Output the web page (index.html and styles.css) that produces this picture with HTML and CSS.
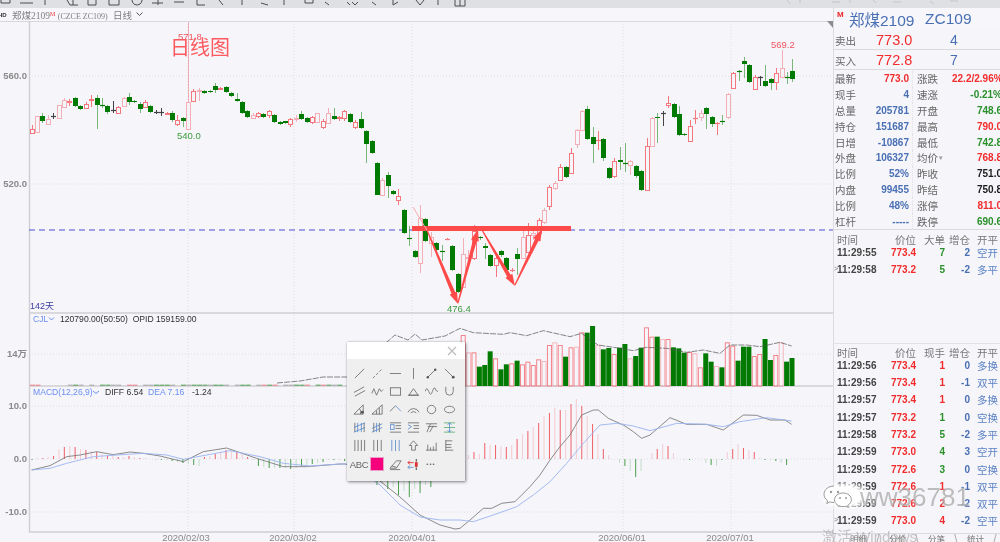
FILE: index.html
```html
<!DOCTYPE html>
<html lang="zh">
<head>
<meta charset="utf-8">
<title>郑煤2109 日线图</title>
<link rel="stylesheet" href="styles.css">
</head>
<body>
<div class="app">
  <svg class="toolbar" viewBox="0 0 1000 8" width="1000" height="8" aria-hidden="true">
    <path class="tb" d="M1 0v3h9V0M20 3h13M45 0v5M67 0l3 5h8M73 0v5M88 0v5h8V0M109 0v5h10V0M132 0a5 5 0 0 0 8 4 5 5 0 0 0 2-4M152 3h11M158 0v5M174 2h10M197 0v5h8M219 0l4 5M242 0v5M261 3l7 2M284 0v5M305 0v3h8V0M325 2l4 3M347 2l3 3M352 2l3 3 3-3M372 2l4 3M393 0v5l5-3M416 0l4 5 4-5M438 0v5"/>
    <path class="tb" d="M455 0v6h10V0M460 6V0"/>
    <path class="tb faint" d="M787 0l3 4M800 0v3M832 2h8M850 0v3M873 0l3 3M893 2h8M930 1l4 3M950 1h8"/>
  </svg>
  <div class="main">
    <div class="chart-col">
      <div class="tabbar">
        <span class="tab-hd">HD</span>
        <span class="tab-name">郑煤2109<sup class="tab-m">M</sup> <span class="tab-code">(CZCE ZC109)</span></span>
        <span class="tab-period">日线</span>
        <svg class="tab-chev" viewBox="0 0 7 5" width="7" height="5" aria-hidden="true"><path d="M.5 .5l3 3 3-3"/></svg>
      </div>
      <svg id="chart" class="chart" viewBox="0 21 833 521" width="833" height="521">
        <g class="grid">
          <path d="M29 76H833M29 184H833M29 354H833M29 406H833M29 459H833M29 512H833"/>
          <path d="M188 21V532M294 21V532M412 21V532M623 21V532M731 21V532"/>
        </g>
        <path class="basis" d="M29.5 21V532M29 313H833M29 386H833M29 532H833"/>
        <path class="midline" d="M29 230H833"/>
        <path class="corner" d="M827 21h6v7z"/>
        <g id="candles"></g>
        <g id="volumes"></g>
        <path id="volline" class="line-v"/>
        <g id="histo"></g>
        <path id="diff" class="line-k"/>
        <path id="dea" class="line-b"/>
        <g class="ax">
          <text x="27" y="79">560.0</text>
          <text x="27" y="187">520.0</text>
          <text x="27" y="357">14万</text>
          <text x="27" y="409">10.0</text>
          <text x="27" y="462">0.0</text>
          <text x="27" y="515">-10.0</text>
        </g>
        <g class="dates">
          <text x="186" y="541">2020/02/03</text>
          <text x="293" y="541">2020/03/02</text>
          <text x="412" y="541">2020/04/01</text>
          <text x="622" y="541">2020/06/01</text>
          <text x="730" y="541">2020/07/01</text>
        </g>
        <text class="days" x="30" y="309">142天</text>
        <text class="pk-r" x="178" y="40">571.8</text>
        <text class="pk-g" x="177" y="139">540.0</text>
        <text class="pk-r" x="771" y="48">569.2</text>
        <text class="pk-g" x="447" y="312">476.4</text>
        <text class="idx-b" x="33" y="322">CJL</text>
        <path class="chev" d="M49 317.5l2.5 2.5 2.5-2.5"/>
        <text class="idx-k" x="60" y="322">120790.00(50:50)  OPID 159159.00</text>
        <text class="idx-b" x="33" y="395">MACD(12,26,9)</text>
        <path class="chev" d="M93 391l3 2.5 3-2.5"/>
        <text class="idx-k" x="105" y="395">DIFF 6.54</text>
        <text class="idx-b" x="148" y="395">DEA 7.16</text>
        <text class="idx-k" x="192" y="395">-1.24</text>
        <rect class="bar-line" x="412" y="226" width="159" height="5"/>
        <path class="pink-line" d="M413 207L428 232"/>
        <g id="arrows"></g>
        <text class="note" x="170" y="55">日线图</text>
      </svg>
    </div>
    <aside class="side">
      <div class="quote-title"><span class="m-flag">M</span><span class="q-name">郑煤2109</span><span class="q-code">ZC109</span></div>
      <div class="book"><span class="lab">卖出</span><span class="big red">773.0</span><span class="big blue">4</span></div>
      <div class="book"><span class="lab">买入</span><span class="big red">772.8</span><span class="big blue">7</span></div>
      <div class="stats">
        <span class="lab">最新</span><b class="red">773.0</b><span class="lab sep">涨跌</span><b class="red">22.2/2.96%</b>
        <span class="lab">现手</span><b class="blue">4</b><span class="lab sep">速涨</span><b class="green">-0.21%</b>
        <span class="lab">总量</span><b class="blue">205781</b><span class="lab sep">开盘</span><b class="green">748.6</b>
        <span class="lab">持仓</span><b class="blue">151687</b><span class="lab sep">最高</span><b class="red">790.0</b>
        <span class="lab">日增</span><b class="blue">-10867</b><span class="lab sep">最低</span><b class="green">742.8</b>
        <span class="lab">外盘</span><b class="blue">106327</b><span class="lab sep">均价<i class="drop">▾</i></span><b class="red">768.8</b>
        <span class="lab">比例</span><b class="blue">52%</b><span class="lab sep">昨收</span><b class="black">751.0</b>
        <span class="lab">内盘</span><b class="blue">99455</b><span class="lab sep">昨结</span><b class="black">750.8</b>
        <span class="lab">比例</span><b class="blue">48%</b><span class="lab sep">涨停</span><b class="red">811.0</b>
        <span class="lab">杠杆</span><b class="blue">-----</b><span class="lab sep">跌停</span><b class="green">690.6</b>
      </div>
      <div class="trades first">
        <div class="tr th"><span>时间</span><span>价位</span><span>大单</span><span>增仓</span><span>开平</span></div>
        <div class="tr"><b class="t">11:29:55</b><b class="red">773.4</b><b class="green">7</b><b class="blue">2</b><span class="kp">空开</span></div>
        <div class="tr cur"><b class="t">11:29:58</b><b class="red">773.2</b><b class="green">5</b><b class="blue">-2</b><span class="kp">多平</span></div>
      </div>
      <div class="trades second">
        <div class="tr th"><span>时间</span><span>价位</span><span>现手</span><span>增仓</span><span>开平</span></div>
        <div class="tr"><b class="t">11:29:56</b><b class="red">773.4</b><b class="red">1</b><b class="blue">0</b><span class="kp">多换</span></div>
        <div class="tr"><b class="t">11:29:56</b><b class="red">773.4</b><b class="red">1</b><b class="blue">-1</b><span class="kp">双平</span></div>
        <div class="tr"><b class="t">11:29:57</b><b class="red">773.4</b><b class="red">1</b><b class="blue">0</b><span class="kp">多换</span></div>
        <div class="tr"><b class="t">11:29:57</b><b class="red">773.2</b><b class="green">1</b><b class="blue">0</b><span class="kp">空换</span></div>
        <div class="tr"><b class="t">11:29:58</b><b class="red">773.2</b><b class="green">5</b><b class="blue">-2</b><span class="kp">多平</span></div>
        <div class="tr"><b class="t">11:29:59</b><b class="red">773.0</b><b class="green">4</b><b class="blue">3</b><span class="kp">空开</span></div>
        <div class="tr"><b class="t">11:29:59</b><b class="red">772.6</b><b class="green">3</b><b class="blue">0</b><span class="kp">空换</span></div>
        <div class="tr"><b class="t">11:29:59</b><b class="red">772.6</b><b class="red">1</b><b class="blue">-1</b><span class="kp">双平</span></div>
        <div class="tr"><b class="t">11:29:59</b><b class="red">772.6</b><b class="red">2</b><b class="blue">-2</b><span class="kp">双平</span></div>
        <div class="tr cur"><b class="t">11:29:59</b><b class="red">773.0</b><b class="red">4</b><b class="blue">-2</b><span class="kp">空平</span></div>
      </div>
      <div class="subtabs"><span>明细</span><i>/</i><span>分价</span><i>\</i><span>分笔</span><i>\</i><span>统计</span><i>/</i></div>
    </aside>
  </div>

  <div class="toolbox">
    <div class="tool-head"><svg viewBox="0 0 10 10" width="10" height="10" aria-hidden="true"><path class="i-l" d="M1 1l8 8M9 1L1 9"/></svg></div>
    <div class="tool-grid">
      <svg viewBox="0 0 14 14"><path class="i" d="M2 12L12 2"/></svg>
      <svg viewBox="0 0 14 14"><path class="i" stroke-dasharray="3 2" d="M2 12L12 2"/></svg>
      <svg viewBox="0 0 14 14"><path class="i" d="M1 7H13"/></svg>
      <svg viewBox="0 0 14 14"><path class="i" d="M7 1V13"/></svg>
      <svg viewBox="0 0 14 14"><path class="i" d="M3 11L11 3"/><circle class="d" cx="3" cy="11" r="1.300"/><circle class="d" cx="11" cy="3" r="1.300"/></svg>
      <svg viewBox="0 0 14 14"><path class="i" d="M2 2L11 11"/><circle class="d" cx="11" cy="11" r="1.500"/></svg>

      <svg viewBox="0 0 14 14"><path class="i" d="M1 8L12 2M2 12L13 6"/></svg>
      <svg viewBox="0 0 14 14"><path class="i" d="M1 9L3 4l3 7 3-7 2 3 2-2"/></svg>
      <svg viewBox="0 0 14 14"><rect class="i" x="1.500" y="3" width="11" height="8"/></svg>
      <svg viewBox="0 0 14 14"><path class="i" d="M2 11L7 4l5 7zM1 11h12"/></svg>
      <svg viewBox="0 0 14 14"><path class="i" d="M0 7q2-6 4 0t4 0 3-3 3 3"/></svg>
      <svg viewBox="0 0 14 14"><path class="i" d="M3 2V7a4 4 0 0 0 8 0V2"/></svg>

      <svg viewBox="0 0 14 14"><path class="i" d="M1 12L11 2V12zM7 6a6 6 0 0 1 1 6"/><circle class="d" cx="10" cy="10" r="1.600"/></svg>
      <svg viewBox="0 0 14 14"><path class="i" d="M1 12L12 2V12zM6 8V12M9 5V12"/></svg>
      <svg viewBox="0 0 14 14"><path class="i" d="M1 9L7 3"/><path class="i-b" d="M7 3l6 6"/></svg>
      <svg viewBox="0 0 14 14"><path class="i" d="M1 10a6.500 6.500 0 0 1 12 0M4 11a3.500 3.500 0 0 1 6 0"/></svg>
      <svg viewBox="0 0 14 14"><circle class="i" cx="7" cy="7" r="4.500"/></svg>
      <svg viewBox="0 0 14 14"><ellipse class="i" cx="7" cy="7" rx="5.500" ry="3.500"/></svg>

      <svg viewBox="0 0 14 14"><path class="i" d="M2 2V12M12 2V12"/><path class="i-b" d="M5 2V12M9 2V12M1 7L13 2M1 12L13 7"/></svg>
      <svg viewBox="0 0 14 14"><path class="i" d="M3 2V12M9 2V12"/><path class="i-b" d="M6 2V12M1 8L12 3M1 12L12 7"/></svg>
      <svg viewBox="0 0 14 14"><path class="i" d="M1 2H13M1 12H13M7 5H13M7 8H13"/><rect class="i-b" x="1.500" y="4" width="4" height="5"/></svg>
      <svg viewBox="0 0 14 14"><path class="i" d="M1 2H13M1 12H13M7 5H13M7 8H13"/><path class="i-b" d="M1 4l4 2-4 3"/></svg>
      <svg viewBox="0 0 14 14"><path class="i" d="M1 3H13M2 12L6 3M5 12L9 5M3 6H13"/></svg>
      <svg viewBox="0 0 14 14"><path class="i-g" d="M1 2H13M1 12H13M1 7H13"/><path class="i-b" d="M7 2V12M5 4l2-2 2 2M5 10l2 2 2-2"/></svg>

      <svg viewBox="0 0 14 14"><path class="i" d="M2 1V13M5.500 1V13M9 1V13M12.500 1V13"/></svg>
      <svg viewBox="0 0 14 14"><path class="i" d="M3 1V13M7 1V13M11 1V13"/></svg>
      <svg viewBox="0 0 14 14"><path class="i-b" d="M3 1V13M7 1V13M11 1V13"/></svg>
      <svg viewBox="0 0 14 14"><path class="i" d="M7 2L2.500 7H5V12H9V7H11.500z"/></svg>
      <svg viewBox="0 0 14 14"><path class="i" d="M1 12H13M3 6V12M6 9V12M9 8V12M12 4V12"/></svg>
      <svg viewBox="0 0 14 14"><path class="i" d="M3 1V13M3 2H10M3 6H9M3 9H9M3 12H11"/></svg>

      <span class="abc">ABC</span>
      <span class="swatch"></span>
      <svg viewBox="0 0 14 14"><path class="i" d="M1 11L8 3H13L8 11zM3 8.500L8 10M1 12.500H12"/></svg>
      <svg viewBox="0 0 14 14"><path class="i-r" d="M7 5H1M3 3L1 5l2 2"/><path class="i-b" d="M7 10H1M3 8l-2 2 2 2"/><path class="i-d" d="M10 1V4M10 10V13"/><rect class="i-rf" x="8.500" y="4.500" width="3" height="5"/></svg>
      <span class="dots">•••</span>
    </div>
  </div>

  <div class="watermark">
    <span class="wm-glow"></span>
    <svg class="wm-logo" viewBox="0 0 30 26" width="30" height="26" aria-hidden="true"><path class="wm-b" d="M11 2C5.500 2 1 5.700 1 10.300c0 2.600 1.400 4.900 3.600 6.400L3.800 19.500l3.100-1.600c1.200.4 2.600.6 4.100.6"/><path class="wm-b" d="M20 9c-4.700 0-8.500 3-8.500 6.800s3.800 6.800 8.500 6.800c1 0 2-.1 2.900-.4l2.500 1.400-.7-2.300c2.200-1.300 3.700-3.300 3.700-5.500C28.500 12 24.700 9 20 9z"/><circle class="wm-d" cx="8" cy="8" r="1.200"/><circle class="wm-d" cx="15" cy="8" r="1.200"/><circle class="wm-d" cx="17" cy="14" r="1"/><circle class="wm-d" cx="23" cy="14" r="1"/></svg>
    <span class="wm-text">ww36781</span>
  </div>
  <div class="activate">激活 Windows</div>
</div>
<script src="chart.js"></script>
</body>
</html>
```

FILE: styles.css
```css
* { box-sizing: border-box; }
html, body { margin: 0; height: 100%; overflow: hidden; background: #f5f5fa; }
body { font-family: "Liberation Sans", "Noto Sans CJK SC", sans-serif; }

.app { position: relative; width: 1000px; height: 542px; overflow: hidden; background: #f5f5fa; filter: blur(0.4px); }

/* clipped main toolbar */
.toolbar { display: block; background: #dfe0e4; }
.tb { fill: none; stroke: #4c4c50; stroke-width: 1; }
.tb.faint { stroke: #c4c4c8; }

.main { display: flex; height: 534px; }
.chart-col { width: 833px; flex: none; display: flex; flex-direction: column; }

.tabbar { height: 13px; display: flex; align-items: center; font-size: 9.500px; color: #808080; background: #f7f7fb; box-shadow: 0 1px 0 #d8d8dc; font-family: "Liberation Serif", "Noto Sans CJK SC", serif; white-space: pre; }
.tab-hd { font: bold 6px "Liberation Sans", sans-serif; color: #333; width: 14px; margin-left: -2px; flex: none; }
.tab-name { width: 91px; flex: none; }
.tab-code { font-size: 8px; }
.tab-m { color: #e33; font-size: 6px; line-height: 0; vertical-align: 3px; }
.tab-period { margin-left: 10px; font-family: "Noto Sans CJK SC", sans-serif; }
.tab-chev { margin-left: 4px; }
.tab-chev path { fill: none; stroke: #555; stroke-width: 1; }

.chart { display: block; flex: none; }
.grid path { fill: none; stroke: #dcdce2; stroke-dasharray: 1 2; }
.basis { fill: none; stroke: #cfcfd3; stroke-width: 1.400; }
.midline { fill: none; stroke: #4f4fd6; stroke-width: 1.200; stroke-dasharray: 6 4; }
.corner { fill: #8d8d90; }
.line-v { fill: none; stroke: #555; stroke-width: .7; stroke-dasharray: 6 1.200; }
.line-k { fill: none; stroke: #707070; stroke-width: .8; }
.line-b { fill: none; stroke: #9ab4f0; stroke-width: .9; }
.ax text { font-size: 9.500px; font-weight: bold; fill: #8a8a8a; text-anchor: end; }
.dates text { font-size: 9.500px; fill: #8a8a8a; text-anchor: middle; }
.days { font-size: 9px; fill: #3d3da0; }
.pk-r { font-size: 9.500px; fill: #ee5560; }
.pk-g { font-size: 9.500px; fill: #3c9a3c; }
.idx-b { font-size: 8.600px; fill: #6c8ff0; }
.idx-k { font-size: 8.600px; fill: #333; white-space: pre; }
.chev { fill: none; stroke: #6c8ff0; }
.bar-line { fill: #ff4a4a; }
.pink-line { fill: none; stroke: #ffaaaa; }
.arrow { fill: #ff4a4a; }
.note { font-size: 20px; fill: #ff5a5f; font-family: "Noto Sans CJK SC", sans-serif; }

/* quote panel */
.side { width: 167px; flex: none; height: 534px; overflow: hidden; border-left: 1px solid #dcdce0; background: #f5f5fa; }
.lab { color: #666; }
.red { color: #f22c2c; }
.blue { color: #4a70b4; }
.green { color: #2a902a; }
.black { color: #1c1c1c; }

.quote-title { height: 22px; display: flex; align-items: center; padding-left: 3px; color: #4a70b4; font-size: 15.500px; background: #f7f7fb; }
.m-flag { color: #e22; font-size: 8px; font-weight: bold; align-self: flex-start; margin-top: 2px; width: 12px; }
.q-name { width: 76px; }

.book { height: 20px; display: grid; grid-template-columns: 41px 74px auto; align-items: center; padding-left: 1px; border-bottom: 1px solid #dadade; }
.book .lab { font-size: 10.500px; align-self: end; line-height: 16px; }
.big { font-size: 14.500px; }
.book .blue { font-size: 14px; }

.stats { display: grid; grid-template-columns: 22px 52px 43px 50px; grid-auto-rows: 15.800px; align-items: center; padding: 1px 0 0 1px; width: 171px; height: 160px; border-bottom: 1px solid #dadade; white-space: nowrap; }
.stats .lab { font-size: 10.500px; }
.stats b { font-size: 10px; text-align: right; }
.stats .sep { margin-left: 3px; padding-left: 4px; border-left: 1px dotted #e2e2e6; height: 100%; display: flex; align-items: center; }
.drop { font-style: normal; font-size: 7px; color: #999; margin-left: 1px; }

.trades { padding-left: 3px; position: relative; }
.trades.first { margin-top: 2px; }
.trades.second { margin-top: 64px; padding-top: 1px; border-top: 1px solid #e2e2e6; }
.tr { display: grid; grid-template-columns: 40px 39px 29px 25px 7px 21px; height: 17.300px; align-items: center; white-space: nowrap; }
.tr > :nth-child(2), .tr > :nth-child(3), .tr > :nth-child(4) { text-align: right; }
.tr > :nth-child(5) { grid-column: 6; }
.tr b { font-size: 10px; }
.tr .t { color: #444; }
.tr.th { height: 12px; font-size: 10.500px; color: #777; }
.kp { font-size: 10.500px; color: #5b82c4; }
.tr.cur::before { content: ">"; position: absolute; left: 0; font-size: 7px; color: #777; margin-top: -2px; }

.subtabs { margin-top: 3px; border-top: 1px solid #dcdce0; height: 12px; display: flex; padding-left: 16px; gap: 6px; font-size: 8.500px; color: #777; line-height: 8px; padding-top: 1px; }
.subtabs i { font-style: normal; color: #aaa; width: 10px; text-align: center; font-size: 12px; }

/* floating drawing toolbox */
.toolbox { position: absolute; left: 347px; top: 342px; width: 118px; height: 139px; background: #efefef; box-shadow: 1px 1px 3px rgba(0,0,0,.45), 0 0 1px rgba(0,0,0,.3); }
.tool-head { height: 17px; background: #fff; display: flex; justify-content: flex-end; align-items: center; padding-right: 8px; }
.i-l { fill: none; stroke: #bdbdbd; stroke-width: 1.200; }
.tool-grid { display: grid; grid-template-columns: repeat(6, 18px); grid-auto-rows: 18.200px; padding: 5px 0 0 3px; place-items: center; }
.tool-grid svg { width: 13px; height: 13px; display: block; }
.i { fill: none; stroke: #6a6a6a; stroke-width: .9; }
.i-b { fill: none; stroke: #5a8ccc; stroke-width: .9; }
.i-g { fill: none; stroke: #5ab070; stroke-width: .9; }
.i-r { fill: none; stroke: #e03030; stroke-width: 1; }
.i-d { fill: none; stroke: #555; stroke-width: 1.200; }
.i-rf { fill: #e03030; }
.d { fill: #555; }
.abc { font-size: 9.500px; color: #666; letter-spacing: -.3px; }
.swatch { width: 12px; height: 12px; background: #f6007e; outline: 1px solid #e8a0c4; }
.dots { font-size: 6px; color: #666; letter-spacing: 1px; }

/* watermark overlays */
.watermark { position: absolute; left: 823px; top: 480px; width: 160px; height: 34px; display: flex; align-items: center; }
.wm-glow { position: absolute; left: -6px; top: 0; width: 56px; height: 32px; border-radius: 50%; background: radial-gradient(closest-side, #fff 55%, rgba(255,255,255,0)); }
.wm-logo { position: relative; flex: none; }
.wm-b { fill: #fff; stroke: #999; stroke-width: 1; }
.wm-d { fill: #999; }
.wm-text { position: relative; margin-left: 7px; font-size: 26px; color: rgba(125,125,125,.5); text-shadow: 0 0 2px rgba(255,255,255,.8); }
.activate { position: absolute; left: 822px; top: 525px; font-size: 15px; color: rgba(150,150,150,.5); white-space: nowrap; }
```

FILE: chart.js
```js
const NS = 'http://www.w3.org/2000/svg';
const $ = id => document.getElementById(id);
function el(parent, tag, attrs) {
  const e = document.createElementNS(NS, tag);
  for (const k in attrs) e.setAttribute(k, attrs[k]);
  parent.appendChild(e);
  return e;
}
const RED = '#f4474f', GREEN = '#007a00', BG = '#f5f5fa', DARK = '#444';

// x, kind (r red, p pale red, g green, k black), body top, body bottom, wick top, wick bottom
const CANDLES = [
[32,'r',129,133,125,133],[37,'p',116,132,116,132],[42,'g',116,121,113,123],[48,'p',119,124,115,125],[53,'k',116,116,113,119],
[59,'p',105,118,105,118],[64,'p',100,107,98,108],[69,'r',101,102,99,106],[75,'g',98,106,97,107],[80,'g',106,109,105,110],
[86,'r',104,108,102,109],[91,'r',99,100,95,107],[97,'g',98,105,95,129],[102,'g',105,105,98,108],[107,'g',106,112,105,114],
[113,'k',110,110,101,113],[118,'r',107,113,106,114],[124,'p',98,106,97,106],[129,'g',97,102,93,105],[134,'g',101,102,100,103],
[140,'g',104,109,102,113],[145,'r',102,107,100,108],[150,'g',106,112,105,113],[156,'k',112,112,110,114],[161,'k',112,112,108,116],
[167,'r',113,114,112,115],[172,'g',113,120,111,122],[177,'r',120,124,115,126],[183,'g',118,121,117,127],[188,'p',102,129,22,130],
[193,'r',91,101,89,102],[199,'p',90,91,88,101],[204,'g',91,93,90,94],[210,'g',91,92,90,93],[215,'g',86,90,83,93],
[220,'r',88,89,87,90],[226,'g',87,92,86,93],[231,'g',93,96,92,97],[237,'g',99,101,93,102],[242,'g',102,113,101,114],
[247,'g',111,117,110,118],[253,'p',115,118,113,119],[258,'r',113,116,112,118],[263,'g',114,117,113,118],[269,'r',111,115,110,118],
[274,'g',115,122,114,123],[280,'g',122,124,121,125],[285,'g',121,123,121,124],[290,'r',119,124,118,127],[296,'p',118,119,115,122],
[301,'g',114,119,111,120],[307,'g',118,122,117,123],[312,'r',117,122,116,124],[317,'p',113,122,113,123],[323,'r',121,127,119,129],
[328,'p',113,123,108,124],[334,'g',116,119,108,120],[339,'r',117,118,116,121],[344,'r',111,118,110,121],[350,'g',114,122,113,123],
[355,'r',122,127,120,129],[361,'g',119,128,112,129],[366,'g',131,144,130,163],[372,'g',141,153,140,154],[377,'g',163,195,162,195],
[382,'p',180,195,178,196],[388,'g',175,186,172,198],[393,'g',191,194,190,195],[398,'r',196,200,189,205],[404,'g',210,233,209,234],
[409,'g',238,238,226,246],[415,'g',251,257,250,258],[420,'p',218,263,205,273],[425,'g',219,241,218,242],[431,'p',237,243,232,257],
[436,'g',243,250,242,251],[442,'g',251,251,245,261],[447,'r',239,239,238,240],[452,'g',246,270,245,271],[458,'g',274,292,273,293],
[463,'p',254,287,238,288],[468,'p',257,258,250,262],[474,'r',231,258,225,260],[480,'g',237,238,236,240],[485,'g',246,248,243,259],
[490,'g',255,266,254,267],[496,'r',258,265,255,277],[501,'g',251,255,250,257],[506,'g',258,270,257,271],[512,'r',270,270,268,272],
[517,'g',254,259,248,275],[523,'p',237,258,230,259],[528,'r',235,252,223,253],[533,'p',233,235,228,240],[539,'r',220,233,218,235],
[544,'p',210,222,208,224],[549,'r',187,206,185,210],[555,'p',183,188,181,190],[560,'r',167,180,164,181],[566,'g',167,177,166,178],
[571,'r',153,173,148,174],[577,'p',130,144,129,148],[582,'p',111,130,110,131],[587,'g',109,139,106,140],[593,'g',137,144,127,163],
[598,'r',140,140,131,150],[603,'g',139,158,138,161],[609,'g',168,178,167,179],[614,'r',161,176,158,178],[620,'g',160,162,147,170],
[625,'g',163,163,143,172],[630,'p',161,165,160,175],[636,'g',166,176,165,178],[641,'g',171,190,170,191],[647,'r',146,190,138,191],
[652,'p',118,146,117,147],[657,'g',117,118,113,143],[663,'k',113,113,111,126],[668,'r',103,105,96,108],[674,'g',104,117,103,118],
[679,'g',114,135,106,136],[684,'g',134,135,133,136],[690,'r',126,141,120,142],[695,'r',118,118,110,124],[701,'p',113,117,110,121],
[706,'g',108,114,107,129],[712,'g',117,124,116,127],[717,'r',123,123,122,135],[722,'g',121,121,115,125],[728,'p',94,117,93,119],
[733,'r',73,88,72,89],[739,'g',71,71,70,81],[744,'g',61,64,57,78],[749,'g',65,82,64,83],[755,'r',77,89,75,90],
[760,'k',77,77,76,86],[765,'g',81,86,65,87],[771,'g',79,83,78,90],[776,'r',73,82,68,90],[782,'p',68,77,50,78],
[787,'g',77,77,72,84],[792,'g',71,79,59,82]
];

const gC = $('candles');
for (const [x, kind, top, bot, wt, wb] of CANDLES) {
  const pale = kind === 'p';
  const col = kind === 'g' ? GREEN : kind === 'k' ? DARK : RED;
  const g = el(gC, 'g', { opacity: pale ? .4 : kind === 'r' ? .72 : 1 });
  el(g, 'path', { d: `M${x + .5} ${wt}V${wb}`, stroke: col, fill: 'none', opacity: kind === 'g' ? .5 : 1 });
  if (top === bot) {
    el(g, 'path', { d: `M${x - 2} ${top + .5}h5`, stroke: col, 'stroke-width': 1.200, fill: 'none' });
  } else if (kind === 'g') {
    el(g, 'rect', { x: x - 2, y: top, width: 5, height: bot - top, fill: GREEN });
  } else {
    el(g, 'rect', { x: x - 1.500, y: top + .5, width: 4, height: bot - top, fill: BG, stroke: col });
  }
}

// volume panel
const STEP = 5.390, X0 = 32, VBASE = 386;
const xAt = i => X0 + i * STEP;
const tiny = 'rr.....kgk.k.ggkk.rr.kkgggk.gkgggkggk.kgg.krgr.kkggr.grgkg.ggr';
const gV = $('volumes');
[...tiny].forEach((c, i) => {
  if (c === '.') return;
  const col = c === 'g' ? GREEN : c === 'r' ? RED : '#888';
  el(gV, 'rect', { x: xAt(i) - 2, y: 384.500, width: 5, height: 1.500, fill: col, opacity: .45 });
});
// kind + top in zoomed units, from index 80
const VOL = [['r',75],['p',127],['r',127],['g',170],['g',165],['g',124],['r',145],['g',178],['g',163],['r',160],['g',152],['r',163],['r',155],['r',165],['r',148],['p',153],['r',105],['p',97],['r',105],['g',140],['r',112],['p',110],['r',67],['g',68],['g',48],['p',105],['g',118],['g',114],['r',132],['g',113],['g',102],['p',145],['g',138],['g',113],['r',52],['r',80],['g',80],['p',87],['r',87],['g',112],['g',115],['g',128],['r',126],['p',130],['r',172],['g',130],['g',155],['p',168],['g',172],['r',97],['r',107],['g',152],['g',110],['g',110],['r',138],['r',132],['g',87],['g',150],['r',135],['p',97],['g',155],['g',144]];
VOL.forEach(([k, z], n) => {
  const x = xAt(80 + n), y = 310 + z / 3;
  if (k === 'g') el(gV, 'rect', { x: x - 2.500, y, width: 5, height: VBASE - y, fill: GREEN });
  else el(gV, 'rect', { x: x - 2, y: y + .5, width: 4, height: VBASE - y - .5, fill: BG, stroke: RED, opacity: k === 'p' ? .35 : .65 });
});

const poly = (pts) => 'M' + pts.map(p => p.join(' ')).join('L');
const z10 = (a) => a.map(([x, y]) => [460 + x / 3, 310 + y / 3]);
const z8 = (a) => a.map(([x, y]) => [x / 3, 300 + y / 3]);
$('volline').setAttribute('d', poly([[277,383],[300,381],[323,377],[347,377],[395,335],[408,340],[415,334],[422,340],[445,336]].concat(z10([[0,55],[40,68],[130,73],[150,68],[200,77],[250,62],[330,80],[365,70],[390,90],[415,105],[480,115],[520,122],[560,112],[620,115],[680,127],[730,120],[780,130],[810,105],[860,105],[900,110],[960,97],[995,108]]))));

// MACD histogram: values in px above the zero line, per bar index
const H = [-1,1,1,2,3,10,12,13,12,10,9,8,7,5,3,3,2,2,3,2,1,1,0,-1,-1,-1,-2,-3,-4,-5,-6,-7,2,3,5,7,9,8,7,5,2,-1,-7,-8,-9,-9,-9,-9,-10,-9,-7,-6,-5,-4,-3,-1,-1,-1,-2,-4,-6,-9,-14,-18,-26,-24,-30,-28,-36,-32,-38,-30,-34,-26,-28,-18,-14,-10,-6,-2,2,4,
7,5,16,14,14,13,12,14,20,25,28,32,36,43,46,51,49,49,55,60,53,43,35,25,10,4,0,-4,-7,-12,-18,-12,0,6,10,15,13,6,0,-1,-1,0,0,-4,-6,-7,-1,7,10,15,11,9,7,1,-1,-1,-2,-4,-6];
const gH = $('histo');
H.forEach((v, i) => {
  if (!v) return;
  const x = xAt(i);
  el(gH, 'path', { d: `M${x} 459V${459 - v}`, stroke: v > 0 ? '#f03a42' : '#1f8a1f', fill: 'none', opacity: i % 2 ? .22 : .8 });
});
$('diff').setAttribute('d', poly(z8([[95,510],[150,497],[200,470],[240,465],[290,455],[340,464],[390,456],[430,460],[480,468],[550,485],[610,455],[680,444],[770,475],[850,500],[920,500],[1020,492]]).concat([[345,464],[365,470],[380,481],[400,497],[420,515],[440,525],[455,529]]).concat(z10([[0,655],[30,630],[70,595],[95,595],[125,580],[165,575],[210,530],[240,495],[270,450],[300,410],[330,375],[365,315],[400,300],[415,300],[445,325],[490,345],[520,365],[545,385],[570,375],[630,323],[680,343],[740,343],[790,360],[850,315],[890,316],[930,330],[975,330],[995,343]]))));
$('dea').setAttribute('d', poly(z8([[95,510],[150,505],[200,490],[280,470],[350,465],[430,460],[500,465],[550,478],[620,465],[690,452],[780,470],[850,490],[930,498],[1020,492]]).concat([[350,464],[380,485],[400,505],[420,517],[440,520]]).concat(z10([[0,630],[40,635],[100,615],[170,590],[220,555],[270,515],[320,460],[370,400],[420,345],[470,340],[520,348],[570,362],[650,340],[740,343],[790,350],[840,335],[920,323],[995,333]]))));

// hand-drawn tapered arrows over the chart
function arrow(x1, y1, x2, y2) {
  const dx = x2 - x1, dy = y2 - y1, len = Math.hypot(dx, dy);
  const ux = dx / len, uy = dy / len, nx = -uy, ny = ux;
  const hx = x2 - ux * 12, hy = y2 - uy * 12;
  const pts = [
    [x1 + nx * .6, y1 + ny * .6],
    [hx + nx * 2, hy + ny * 2],
    [hx + nx * 4, hy + ny * 4],
    [x2, y2],
    [hx - nx * 4, hy - ny * 4],
    [hx - nx * 2, hy - ny * 2],
    [x1 - nx * .6, y1 - ny * .6]
  ];
  el($('arrows'), 'polygon', { class: 'arrow', points: pts.map(p => p.join(',')).join(' ') });
}
arrow(427, 230, 458, 304);
arrow(458, 303, 478, 229);
arrow(482, 230, 515, 286);
arrow(515, 285, 542, 229);
```
